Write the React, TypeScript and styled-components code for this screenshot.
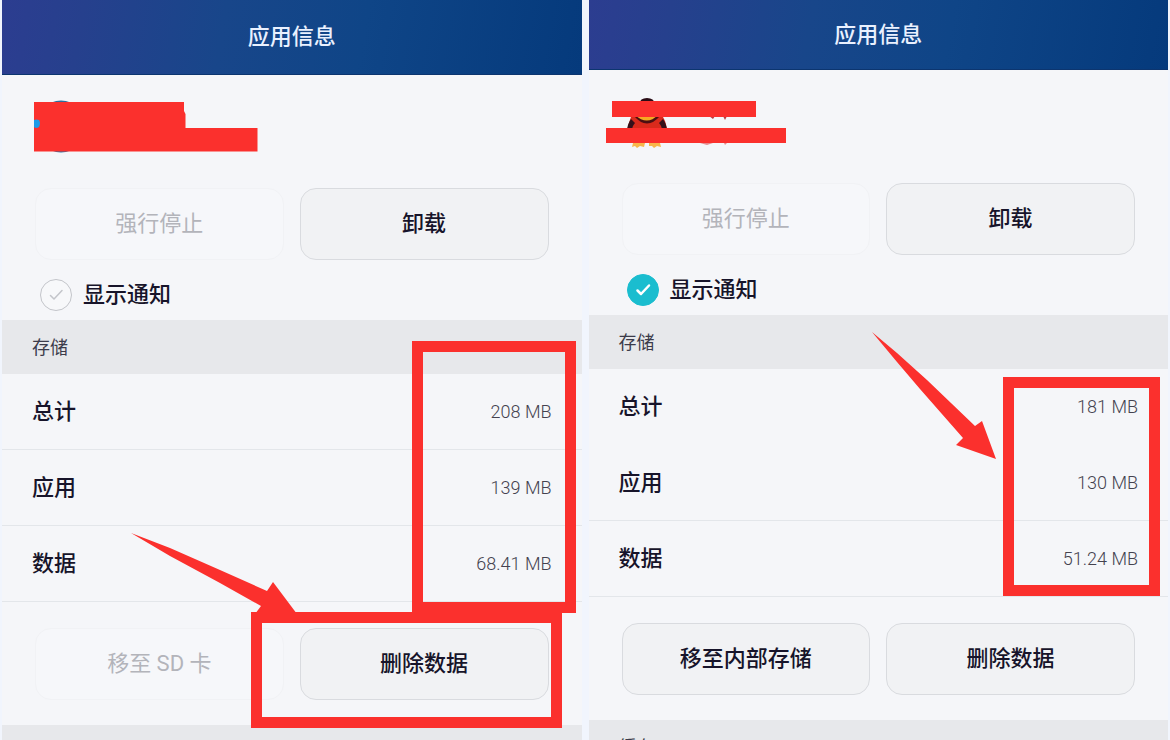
import React from "react";
import styled, { createGlobalStyle } from "styled-components";

const RED = "#fb302d";

const GlobalStyle = createGlobalStyle`
  *, *::before, *::after { box-sizing: border-box; }
  body {
    margin: 0;
    background: #f1f5fd;
    color: #17142a;
    font-family: Roboto, "Noto Sans CJK SC", sans-serif;
  }
`;

const Page = styled.main`
  display: grid;
  grid-template-columns: 1fr 1fr;
  gap: 7px;
  height: 100vh;
  padding: 0 2px;
  overflow: hidden;
`;

const Panel = styled.section`
  position: relative;
  background: #f5f6f9;
`;

const Header = styled.header<{ $height: number }>`
  display: flex;
  align-items: center;
  justify-content: center;
  height: ${(p) => p.$height}px;
  background: linear-gradient(100deg, #2c3d90 0%, #26408d 14%, #18468a 38%, #0f4587 62%, #053a7c 100%);
  border-bottom: 1px solid #0c356f;
`;

const Title = styled.h1`
  margin: 0;
  color: #eaf1ff;
  font-size: 22px;
  font-weight: 500;
  line-height: 32px;
`;

const Identity = styled.div<{ $top: number; $left: number }>`
  height: 113px;
  padding: ${(p) => p.$top}px 0 0 ${(p) => p.$left}px;

  svg { display: block; }
`;

const ButtonRow = styled.div`
  display: grid;
  grid-template-columns: 1fr 1fr;
  gap: 16px;
  padding: 0 33px;
`;

const ActionButton = styled.button`
  height: 72px;
  padding: 0;
  border: 1px solid #d9dbdf;
  border-radius: 16px;
  background: #f1f2f4;
  color: #17142a;
  font-family: inherit;
  font-size: 22px;
  font-weight: 500;
  line-height: 32px;

  &:disabled {
    border-color: #f1f2f5;
    background: #f6f7fa;
    color: #b3b4ba;
    font-weight: 400;
  }
`;

const NotifyLabel = styled.label`
  display: flex;
  align-items: center;
  gap: 11px;
  height: 60px;
  padding: 10px 38px 0;
  font-size: 22px;
  font-weight: 500;
  line-height: 32px;
`;

const CheckWrap = styled.span`
  position: relative;
  width: 32px;
  height: 32px;

  svg {
    position: absolute;
    inset: 0;
    pointer-events: none;
  }
`;

const CheckInput = styled.input`
  display: block;
  width: 32px;
  height: 32px;
  margin: 0;
  appearance: none;
  border: 1px solid #c3c5ca;
  border-radius: 50%;
  background: #f7f8fa;

  & + svg { stroke: #c3c5ca; stroke-width: 1.5; }

  &:checked {
    border-color: #1abdcf;
    background: #1abdcf;
  }
  &:checked + svg { stroke: #ffffff; stroke-width: 2.5; }
`;

const SectionBand = styled.h2`
  margin: 0;
  height: 54px;
  padding: 0 30px;
  background: #e7e8eb;
  color: #3c3b4a;
  font-size: 18px;
  font-weight: 400;
  line-height: 56px;
`;

const StorageTable = styled.table`
  width: 100%;
  border-collapse: separate;
  border-spacing: 0;
`;

const StorageRow = styled.tr<{ $divided: boolean }>`
  height: 76px;

  th, td {
    padding: 0 30px;
    border-bottom: 1px solid ${(p) => (p.$divided ? "#e3e6ea" : "transparent")};
    line-height: 32px;
  }
`;

const RowLabel = styled.th`
  text-align: left;
  font-size: 22px;
  font-weight: 500;
`;

const RowValue = styled.td`
  text-align: right;
  color: #44424f;
  font-size: 18px;
  font-weight: 300;
`;

const FooterActions = styled.div`
  padding: 26px 0 25px;
`;

const Frame = styled.div<{ $top: number; $right: number; $width: number; $height: number }>`
  position: absolute;
  top: ${(p) => p.$top}px;
  right: ${(p) => p.$right}px;
  width: ${(p) => p.$width}px;
  height: ${(p) => p.$height}px;
  border: 11px solid ${RED};
  pointer-events: none;
`;

const Arrow = styled.svg<{ $top: number; $right: number }>`
  position: absolute;
  top: ${(p) => p.$top}px;
  right: ${(p) => p.$right}px;
  fill: ${RED};
  pointer-events: none;
`;

function HiddenApp() {
  return (
    <svg width="224" height="54" viewBox="0 0 224 54" aria-hidden="true">
      <ellipse cx="27" cy="27.5" rx="25" ry="26" fill="#2b6f9f" />
      <path d="M0 3H150V12L151.500 15V29H223.500V52.500H0Z" fill={RED} />
      <path d="M0 21Q2 20 5 21Q7 24 5 28Q2 30 0 28Z" fill="#1c9be8" />
    </svg>
  );
}

function HiddenPenguin() {
  return (
    <svg width="182" height="54" viewBox="0 0 182 54" aria-hidden="true">
      <path d="M33 7Q34 1 41 1Q48 1 49 7Z" fill="#2a0c16" />
      <path d="M25 20H57Q61 27 61 35H21Q22 27 25 20Z" fill="#d92a1c" />
      <path d="M25 22Q21 28 21 34H26Q26 29 29 26ZM57 22Q61 28 61 34H56Q56 29 53 26Z" fill="#35101a" />
      <path d="M28 19Q41 34 54 19Z" fill="#4a0f12" />
      <path d="M29 18Q41 29 52 18Z" fill="#f6a822" />
      <path d="M27 46H39L38 50L34 49L31 51L29 49L26 50ZM43 46H54L55 50L51 49L48 51L46 49L43 49Z" fill="#f8b64a" />
      <path d="M103 19H109L107 22ZM117 19H121L119 23Z" fill="#b93a40" />
      <path d="M94 46H107L101 48ZM118 46H121L119 48Z" fill="#e58a8d" />
      <rect x="6" y="4" width="144" height="16" fill={RED} />
      <rect x="0" y="31" width="180" height="15" fill={RED} />
    </svg>
  );
}

type Row = { label: string; value: string; divided: boolean };

type AppInfoProps = {
  headerHeight: number;
  identityTop: number;
  identityLeft: number;
  identity: React.ReactNode;
  notify: boolean;
  rows: Row[];
  moveLabel: string;
  canMove: boolean;
  children: React.ReactNode;
};

function AppInfo(props: AppInfoProps) {
  return (
    <Panel>
      <Header $height={props.headerHeight}>
        <Title>应用信息</Title>
      </Header>
      <Identity $top={props.identityTop} $left={props.identityLeft}>
        {props.identity}
      </Identity>
      <ButtonRow>
        <ActionButton type="button" disabled>强行停止</ActionButton>
        <ActionButton type="button">卸载</ActionButton>
      </ButtonRow>
      <NotifyLabel>
        <CheckWrap>
          <CheckInput type="checkbox" defaultChecked={props.notify} />
          <svg width="32" height="32" viewBox="0 0 32 32" fill="none" strokeLinecap="round" strokeLinejoin="round">
            <path d="M10.500 16.500L14 20L22 11.500" />
          </svg>
        </CheckWrap>
        显示通知
      </NotifyLabel>
      <SectionBand>存储</SectionBand>
      <StorageTable>
        <tbody>
          {props.rows.map((row) => (
            <StorageRow key={row.label} $divided={row.divided}>
              <RowLabel scope="row">{row.label}</RowLabel>
              <RowValue>{row.value}</RowValue>
            </StorageRow>
          ))}
        </tbody>
      </StorageTable>
      <FooterActions>
        <ButtonRow>
          <ActionButton type="button" disabled={!props.canMove}>{props.moveLabel}</ActionButton>
          <ActionButton type="button">删除数据</ActionButton>
        </ButtonRow>
      </FooterActions>
      <SectionBand>缓存</SectionBand>
      {props.children}
    </Panel>
  );
}

export default function App() {
  return (
    <>
      <GlobalStyle />
      <Page>
        <AppInfo
          headerHeight={75}
          identityTop={24}
          identityLeft={32}
          identity={<HiddenApp />}
          notify={false}
          rows={[
            { label: "总计", value: "208 MB", divided: true },
            { label: "应用", value: "139 MB", divided: true },
            { label: "数据", value: "68.41 MB", divided: true },
          ]}
          moveLabel="移至 SD 卡"
          canMove={false}
        >
          <Frame $top={341} $right={6} $width={164} $height={272} />
          <Frame $top={612} $right={20} $width={311} $height={116} />
          <Arrow $top={533} $right={285} width="166" height="81" viewBox="0 0 166 81" aria-hidden="true">
            <path d="M0 0L39 15L89 37L136 58L142 49L166 81H124L130 73L89 50L39 23Z" />
          </Arrow>
        </AppInfo>
        <AppInfo
          headerHeight={70}
          identityTop={27}
          identityLeft={17}
          identity={<HiddenPenguin />}
          notify
          rows={[
            { label: "总计", value: "181 MB", divided: false },
            { label: "应用", value: "130 MB", divided: true },
            { label: "数据", value: "51.24 MB", divided: true },
          ]}
          moveLabel="移至内部存储"
          canMove
        >
          <Frame $top={377} $right={8} $width={157} $height={219} />
          <Arrow $top={332} $right={172} width="124" height="128" viewBox="0 0 124 128" aria-hidden="true">
            <path d="M0 0L25 21L55 48L103 94L110 89L124 127L84 113L91 106L48 57L25 30Z" />
          </Arrow>
        </AppInfo>
      </Page>
    </>
  );
}
